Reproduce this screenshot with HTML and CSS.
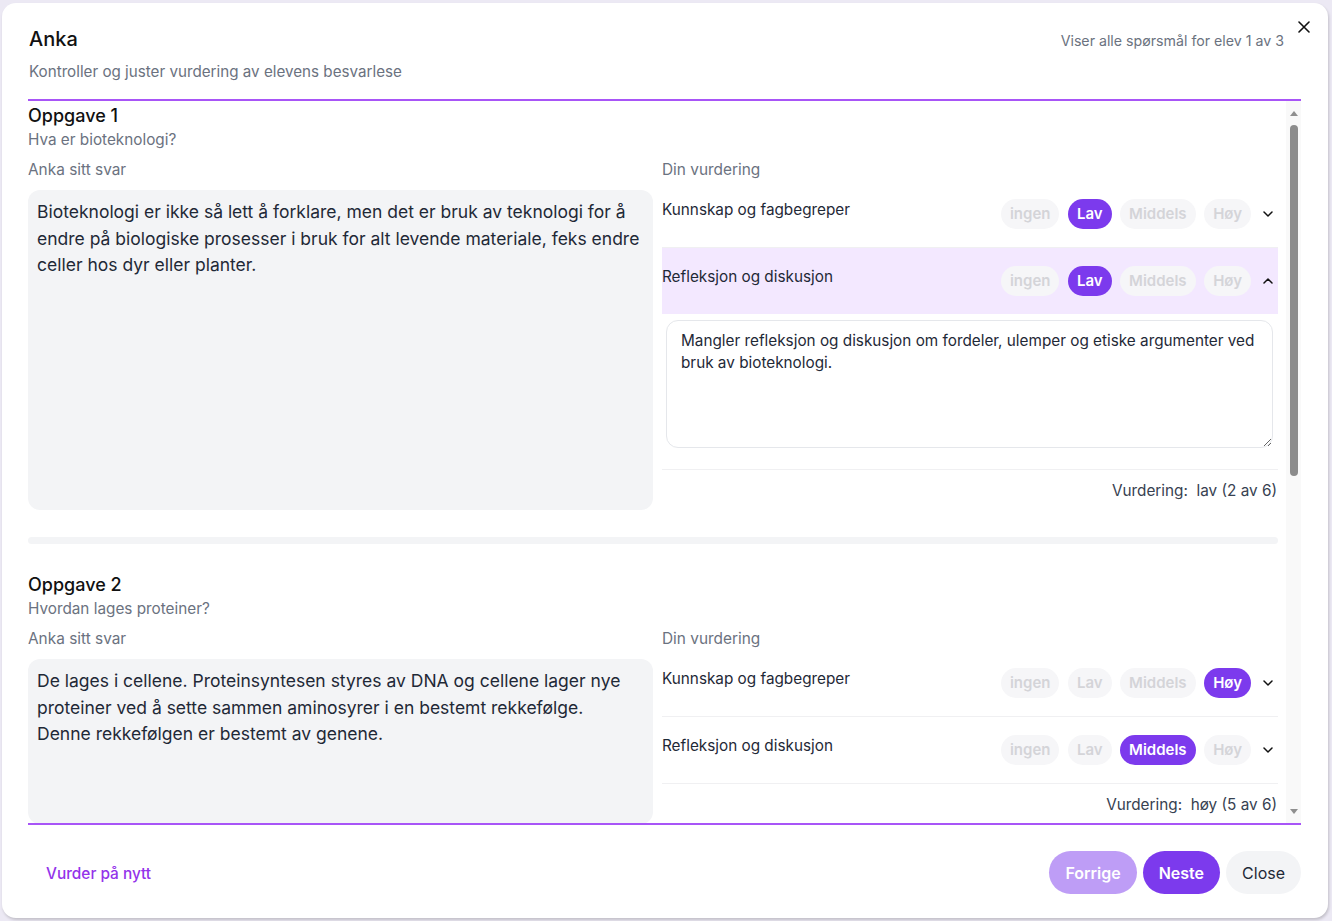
FILE: index.html
```html
<!DOCTYPE html>
<html lang="no">
<head>
<meta charset="utf-8">
<title>Anka – vurdering</title>
<link rel="stylesheet" href="styles.css">
</head>
<body>
<div class="modal">
  <header class="modal-head">
    <div class="head-left">
      <h1 class="title">Anka</h1>
      <p class="subtitle">Kontroller og juster vurdering av elevens besvarlese</p>
    </div>
    <p class="counter">Viser alle spørsmål for elev 1 av 3</p>
    <button class="close" aria-label="Lukk">
      <svg width="12" height="12" viewBox="0 0 12 12"><path d="M1 1L11 11M11 1L1 11" stroke="#111" stroke-width="1.6" stroke-linecap="round"/></svg>
    </button>
  </header>

  <div class="scroll-frame">
    <div class="scroller">
      <section class="task">
        <h2 class="task-title">Oppgave 1</h2>
        <p class="task-q">Hva er bioteknologi?</p>
        <div class="task-grid">
          <div class="answer-col">
            <div class="col-label">Anka sitt svar</div>
            <div class="answer">Bioteknologi er ikke så lett å forklare, men det er bruk av teknologi for å endre på biologiske prosesser i bruk for alt levende materiale, feks endre celler hos dyr eller planter.</div>
          </div>
          <div class="assess-col">
            <div class="col-label tight">Din vurdering</div>
            <div class="crit">
              <div class="crit-row">
                <span class="crit-name">Kunnskap og fagbegreper</span>
                <div class="pills"><span class="pill">ingen</span><span class="pill on">Lav</span><span class="pill">Middels</span><span class="pill">Høy</span></div>
                <span class="chev"><svg width="10" height="6" viewBox="0 0 10 6"><path d="M1 1L5 5L9 1" fill="none" stroke="#111" stroke-width="1.5" stroke-linecap="round" stroke-linejoin="round"/></svg></span>
              </div>
            </div>
            <div class="crit open">
              <div class="crit-row">
                <span class="crit-name">Refleksjon og diskusjon</span>
                <div class="pills"><span class="pill">ingen</span><span class="pill on">Lav</span><span class="pill">Middels</span><span class="pill">Høy</span></div>
                <span class="chev"><svg width="10" height="6" viewBox="0 0 10 6"><path d="M1 5L5 1L9 5" fill="none" stroke="#111" stroke-width="1.5" stroke-linecap="round" stroke-linejoin="round"/></svg></span>
              </div>
              <div class="crit-body">
                <textarea class="comment">Mangler refleksjon og diskusjon om fordeler, ulemper og etiske argumenter ved bruk av bioteknologi.</textarea>
              </div>
            </div>
            <div class="score">Vurdering:&nbsp; lav (2 av 6)</div>
          </div>
        </div>
      </section>

      <div class="task-sep"></div>

      <section class="task">
        <h2 class="task-title">Oppgave 2</h2>
        <p class="task-q">Hvordan lages proteiner?</p>
        <div class="task-grid">
          <div class="answer-col">
            <div class="col-label">Anka sitt svar</div>
            <div class="answer">De lages i cellene. Proteinsyntesen styres av DNA og cellene lager nye proteiner ved å sette sammen aminosyrer i en bestemt rekkefølge. Denne rekkefølgen er bestemt av genene.</div>
          </div>
          <div class="assess-col">
            <div class="col-label tight">Din vurdering</div>
            <div class="crit">
              <div class="crit-row">
                <span class="crit-name">Kunnskap og fagbegreper</span>
                <div class="pills"><span class="pill">ingen</span><span class="pill">Lav</span><span class="pill">Middels</span><span class="pill on">Høy</span></div>
                <span class="chev"><svg width="10" height="6" viewBox="0 0 10 6"><path d="M1 1L5 5L9 1" fill="none" stroke="#111" stroke-width="1.5" stroke-linecap="round" stroke-linejoin="round"/></svg></span>
              </div>
            </div>
            <div class="crit">
              <div class="crit-row">
                <span class="crit-name">Refleksjon og diskusjon</span>
                <div class="pills"><span class="pill">ingen</span><span class="pill">Lav</span><span class="pill on">Middels</span><span class="pill">Høy</span></div>
                <span class="chev"><svg width="10" height="6" viewBox="0 0 10 6"><path d="M1 1L5 5L9 1" fill="none" stroke="#111" stroke-width="1.5" stroke-linecap="round" stroke-linejoin="round"/></svg></span>
              </div>
            </div>
            <div class="score">Vurdering:&nbsp; høy (5 av 6)</div>
          </div>
        </div>
      </section>

      <div class="task-sep"></div>

      <section class="task">
        <h2 class="task-title">Oppgave 3</h2>
        <p class="task-q">Gi et eksempel på bruk av bioteknologi.</p>
        <div class="task-grid">
          <div class="answer-col">
            <div class="col-label">Anka sitt svar</div>
            <div class="answer">Et eksempel er genmodifiserte planter som tåler tørke bedre, eller produksjon av insulin ved hjelp av bakterier.</div>
          </div>
          <div class="assess-col">
            <div class="col-label tight">Din vurdering</div>
            <div class="crit">
              <div class="crit-row">
                <span class="crit-name">Kunnskap og fagbegreper</span>
                <div class="pills"><span class="pill">ingen</span><span class="pill">Lav</span><span class="pill on">Middels</span><span class="pill">Høy</span></div>
                <span class="chev"><svg width="10" height="6" viewBox="0 0 10 6"><path d="M1 1L5 5L9 1" fill="none" stroke="#111" stroke-width="1.5" stroke-linecap="round" stroke-linejoin="round"/></svg></span>
              </div>
            </div>
            <div class="crit">
              <div class="crit-row">
                <span class="crit-name">Refleksjon og diskusjon</span>
                <div class="pills"><span class="pill">ingen</span><span class="pill on">Lav</span><span class="pill">Middels</span><span class="pill">Høy</span></div>
                <span class="chev"><svg width="10" height="6" viewBox="0 0 10 6"><path d="M1 1L5 5L9 1" fill="none" stroke="#111" stroke-width="1.5" stroke-linecap="round" stroke-linejoin="round"/></svg></span>
              </div>
            </div>
            <div class="score">Vurdering:&nbsp; middels (3 av 6)</div>
          </div>
        </div>
      </section>
    </div>

    <div class="vscroll" aria-hidden="true">
      <span class="vs-btn"><svg width="8" height="5" viewBox="0 0 8 5"><path d="M0 5L4 0L8 5Z" fill="#8f8f8f"/></svg></span>
      <div class="vs-track"><div class="vs-thumb"></div></div>
      <span class="vs-btn"><svg width="8" height="5" viewBox="0 0 8 5"><path d="M0 0L8 0L4 5Z" fill="#8f8f8f"/></svg></span>
    </div>
  </div>

  <footer class="modal-foot">
    <button class="link-btn">Vurder på nytt</button>
    <div class="actions">
      <button class="btn btn-prev">Forrige</button>
      <button class="btn btn-next">Neste</button>
      <button class="btn btn-close">Close</button>
    </div>
  </footer>
</div>
</body>
</html>
```

FILE: styles.css
```css
* { box-sizing: border-box; }

html, body {
  margin: 0;
  height: 921px;
}

body {
  background: #ece9f4;
  padding: 3px 4px 3px 2px;
  font-family: Inter, "Noto Sans", sans-serif;
  color: #111827;
  overflow: hidden;
}

.modal {
  position: relative;
  height: 915px;
  background: #fff;
  border-radius: 14px;
  box-shadow: 1px 2px 3px rgba(0, 0, 0, 0.18);
  display: flex;
  flex-direction: column;
}

/* header */
.modal-head {
  display: flex;
  justify-content: space-between;
  align-items: flex-start;
  height: 96px;
  padding: 22px 44px 0 27px;
}

.title {
  margin: 0;
  font-size: 20px;
  line-height: 28px;
  font-weight: 500;
  color: #111;
}

.subtitle {
  margin: 9px 0 0;
  font-size: 15.2px;
  line-height: 20px;
  color: #6b7280;
}

.counter {
  margin: 6px 0 0;
  font-size: 14.2px;
  line-height: 20px;
  color: #6b7280;
}

.close {
  position: absolute;
  top: 16px;
  right: 16px;
  width: 16px;
  height: 16px;
  padding: 0;
  border: 0;
  background: none;
  display: flex;
  align-items: center;
  justify-content: center;
}

/* scroll area */
.scroll-frame {
  display: flex;
  height: 726px;
  margin: 0 27px 0 26px;
  border-top: 2px solid #a855f7;
  border-bottom: 2px solid #a855f7;
}

.scroller {
  flex: 1;
  min-width: 0;
  overflow-y: auto;
  padding: 3px 8px 0 0;
}

.vscroll {
  width: 15px;
  flex: none;
  background: #f9f9f9;
  display: flex;
  flex-direction: column;
}

.vs-btn {
  height: 24px;
  display: flex;
  align-items: center;
  justify-content: center;
  padding-left: 1px;
}

.vs-track {
  flex: 1;
  padding: 0 3px 0 4px;
}

.vs-thumb {
  height: 351px;
  background: #8c8c8c;
  border-radius: 4px;
}

.task-title {
  margin: 0;
  font-size: 18px;
  line-height: 24px;
  font-weight: 500;
  color: #111;
}

.task-q {
  margin: 1px 0 0;
  font-size: 15.3px;
  line-height: 21px;
  color: #6b7280;
}

.task-grid {
  display: grid;
  grid-template-columns: 625px 1fr;
  column-gap: 9px;
  margin-top: 10px;
}

.answer-col {
  display: flex;
  flex-direction: column;
}

.col-label {
  font-size: 15.4px;
  line-height: 20px;
  color: #6b7280;
  margin-bottom: 10px;
}

.col-label.tight {
  margin-bottom: 1px;
}

.answer {
  flex: 1;
  background: #f3f4f6;
  border-radius: 12px;
  padding: 9px 12px 10px 9px;
  font-size: 17.5px;
  line-height: 26.5px;
  color: #1f2937;
}

.crit {
  border-bottom: 1px solid #f0f0f2;
}

.crit-row {
  display: flex;
  align-items: flex-start;
  padding: 18px 0;
}

.crit.open .crit-row {
  background: #f3e8ff;
}

.crit-name {
  flex: 1;
  font-size: 15.3px;
  line-height: 20px;
  color: #1f2937;
  margin-top: 1px;
}

.pills {
  display: flex;
  gap: 8.5px;
}

.pill {
  height: 30px;
  padding: 0 9px;
  border-radius: 15px;
  background: #f6f6f8;
  color: #d4d4d8;
  font-size: 15px;
  font-weight: 600;
  line-height: 30px;
}

.pill.on {
  background: #7c3aed;
  color: #fff;
}

.chev {
  width: 27px;
  height: 30px;
  display: flex;
  align-items: center;
  justify-content: flex-end;
  padding-right: 5px;
}

.crit-body {
  padding: 6px 5px 21px 4px;
}

.comment {
  display: block;
  width: 100%;
  height: 128px;
  border: 1px solid #e5e7eb;
  border-radius: 12px;
  padding: 9px 14px;
  font-family: Inter, "Noto Sans", sans-serif;
  font-size: 15.3px;
  line-height: 22px;
  color: #1f2937;
  resize: vertical;
  outline: none;
}

.score {
  text-align: right;
  font-size: 15.3px;
  line-height: 20px;
  color: #374151;
  padding: 11px 1px 9px 0;
}

.task-sep {
  height: 7px;
  background: #f3f4f6;
  border-radius: 4px;
  margin: 27px 0 29px;
}

/* footer */
.modal-foot {
  flex: 1;
  display: flex;
  justify-content: space-between;
  align-items: center;
  padding: 2px 27px 0 44px;
}

.link-btn {
  border: 0;
  background: none;
  padding: 0;
  margin-top: 1px;
  font-family: Inter, "Noto Sans", sans-serif;
  font-size: 15.4px;
  font-weight: 500;
  color: #9333ea;
}

.actions {
  display: flex;
  gap: 6px;
}

.btn {
  height: 43px;
  padding: 0 16px;
  border: 0;
  border-radius: 22px;
  font-family: Inter, "Noto Sans", sans-serif;
  font-size: 16px;
  font-weight: 600;
}

.btn-prev {
  background: #be9df6;
  color: #fff;
}

.btn-next {
  background: #7c3aed;
  color: #fff;
}

.btn-close {
  background: #f3f4f6;
  color: #1f2937;
  font-weight: 400;
}
```
